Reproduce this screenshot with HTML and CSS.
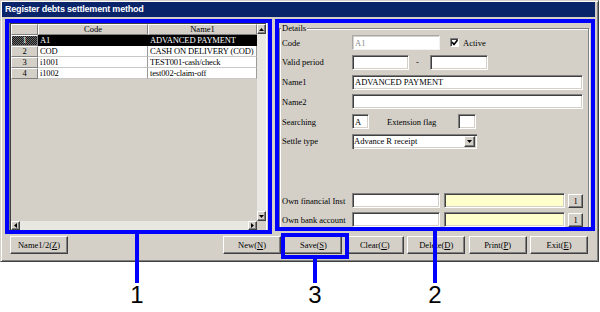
FILE: index.html
```html
<!DOCTYPE html>
<html lang="en">
<head>
	<meta charset="UTF-8">
	<title>Register debts settlement method</title>
	<link rel="stylesheet" href="styles.css">
</head>
<body>
	<div class="window">
		<div class="titlebar">Register debts settlement method</div>
		<div class="main">
			<div class="grid">
				<div class="cells">
					<div class="row head">
						<div class="rh"></div>
						<div class="c code">Code</div>
						<div class="c name">Name1</div>
					</div>
					<div class="row sel">
						<div class="rh">1</div>
						<div class="c code">A1</div>
						<div class="c name">ADVANCED PAYMENT</div>
					</div>
					<div class="row">
						<div class="rh">2</div>
						<div class="c code">COD</div>
						<div class="c name">CASH ON DELIVERY (COD)</div>
					</div>
					<div class="row">
						<div class="rh">3</div>
						<div class="c code">i1001</div>
						<div class="c name">TEST001-cash/check</div>
					</div>
					<div class="row">
						<div class="rh">4</div>
						<div class="c code">i1002</div>
						<div class="c name">test002-claim-off</div>
					</div>
				</div>
				<div class="vscroll">
					<div class="sbtn"><svg width="5" height="3"><polygon points="0,3 5,3 2.5,0"/></svg></div>
					<div class="track"></div>
					<div class="sbtn"><svg width="5" height="3"><polygon points="0,0 5,0 2.5,3"/></svg></div>
				</div>
				<div class="hscroll">
					<div class="sbtn"><svg width="3" height="5"><polygon points="3,0 3,5 0,2.5"/></svg></div>
					<div class="track"></div>
					<div class="sbtn"><svg width="3" height="5"><polygon points="0,0 0,5 3,2.5"/></svg></div>
				</div>
				<div class="corner"></div>
			</div>

			<fieldset class="details">
				<legend>Details</legend>
				<div class="form">
					<div class="frow">
						<span class="lbl">Code</span>
						<input class="edit dis w88" value="A1">
						<span class="check"><svg width="7" height="7"><polyline points="1,3 3,5.5 6.5,1" /></svg></span>
						<span class="checklbl">Active</span>
					</div>
					<div class="frow">
						<span class="lbl">Valid period</span>
						<input class="edit w57" value="">
						<span class="dash">-</span>
						<input class="edit w58" value="">
					</div>
					<div class="frow">
						<span class="lbl">Name1</span>
						<input class="edit w231" value="ADVANCED PAYMENT">
					</div>
					<div class="frow">
						<span class="lbl">Name2</span>
						<input class="edit w231" value="">
					</div>
					<div class="frow">
						<span class="lbl">Searching</span>
						<input class="edit w17" value="A">
						<span class="extlbl">Extension flag</span>
						<input class="edit w18" value="">
					</div>
					<div class="frow">
						<span class="lbl">Settle type</span>
						<div class="select">
							<span class="seltext">Advance R receipt</span>
							<span class="drop"><svg width="5" height="3"><polygon points="0,0 5,0 2.5,3"/></svg></span>
						</div>
					</div>

					<div class="frow own">
						<span class="lbl">Own financial Inst</span>
						<input class="edit w88" value="">
						<input class="edit ref" value="">
						<button class="pick">1</button>
					</div>
					<div class="frow">
						<span class="lbl">Own bank account</span>
						<input class="edit w88" value="">
						<input class="edit ref" value="">
						<button class="pick">1</button>
					</div>
				</div>
			</fieldset>
		</div>

		<div class="buttons">
			<button class="btn">Name1/2(<u>Z</u>)</button>
			<div class="cmds">
				<button class="btn">New(<u>N</u>)</button>
				<button class="btn">Save(<u>S</u>)</button>
				<button class="btn">Clear(<u>C</u>)</button>
				<button class="btn">Delete(<u>D</u>)</button>
				<button class="btn">Print(<u>P</u>)</button>
				<button class="btn">Exit(<u>E</u>)</button>
			</div>
		</div>
	</div>

	<!-- callouts drawn over the screenshot -->
	<div class="marks">
		<div class="box box-grid"></div>
		<div class="box box-details"></div>
		<div class="box box-save"></div>
		<div class="callout c1"><span class="stem"></span><span class="num">1</span></div>
		<div class="callout c3"><span class="stem"></span><span class="num">3</span></div>
		<div class="callout c2"><span class="stem"></span><span class="num">2</span></div>
	</div>
</body>
</html>
```

FILE: styles.css
```css
* {
	margin: 0;
	padding: 0;
}
body {
	background: #fff;
	font: 8.5px "Liberation Serif", serif;
	color: #000;
}
input, button {
	font: inherit;
	color: inherit;
}

.window {
	width: 599px;
	height: 262px;
	box-sizing: border-box;
	border: 1px solid;
	border-color: #d4d0c8 #404040 #404040 #d4d0c8;
	box-shadow: inset 1px 1px #fff, inset -1px -1px #808080;
	padding: 1px;
	background: #d4d0c8;
}
.titlebar {
	height: 15px;
	box-sizing: border-box;
	margin-right: 2px;
	padding: 2px 0 0 3px;
	line-height: 13px;
	background: #0a246a;
	color: #fff;
	font: bold 9px "Liberation Sans", Arial, sans-serif;
	letter-spacing: -0.2px;
	white-space: nowrap;
}
.main {
	display: flex;
	align-items: flex-start;
	height: 219px;
	box-sizing: border-box;
	padding: 5px 0 0 7px;
}

/* list grid */
.grid {
	display: grid;
	grid-template-columns: 246px 9px;
	grid-template-rows: 197px 9px;
	border: 1px solid;
	border-color: #808080 #fff #fff #808080;
	padding: 1px 0 0 1px;
	background: #404040;
}
.cells {
	background: #d4d0c8;
	overflow: hidden;
}
.row {
	display: flex;
	height: 11px;
	line-height: 10px;
	white-space: nowrap;
}
.rh {
	width: 27px;
	box-sizing: border-box;
	border-right: 1px solid #808080;
	border-bottom: 1px solid #808080;
	border-top: 1px solid #fff;
	border-left: 1px solid #fff;
	line-height: 9px;
	text-align: center;
	background: #d4d0c8;
}
.c {
	box-sizing: border-box;
	padding-left: 2px;
	overflow: hidden;
	letter-spacing: -0.15px;
	background: #fff;
	border-right: 1px solid #9a9a9a;
	border-bottom: 1px solid #c8c8c8;
}
.code {
	width: 110px;
}
.name {
	width: 109px;
}
.head .c {
	padding: 0;
	text-align: center;
	line-height: 9px;
	letter-spacing: 0;
	background: #d4d0c8;
	border-top: 1px solid #fff;
	border-left: 1px solid #fff;
	border-right-color: #808080;
	border-bottom-color: #808080;
}
.sel .rh {
	background: repeating-conic-gradient(#1a1a1a 0 25%, #6a6a6a 0 50%) 0 0 / 2px 2px;
	color: #fff;
}
.sel .c {
	background: #000;
	color: #fff;
	border-color: #000;
}
.vscroll {
	display: flex;
	flex-direction: column;
	background: #d4d0c8;
}
.hscroll {
	display: flex;
	background: #d4d0c8;
}
.track {
	flex: 1;
	background: #e9e7e2;
}
.sbtn {
	width: 9px;
	height: 10px;
	box-sizing: border-box;
	display: flex;
	align-items: center;
	justify-content: center;
	border: 1px solid;
	border-color: #fff #404040 #404040 #fff;
	box-shadow: inset -1px -1px #808080;
	background: #d4d0c8;
}
.hscroll .sbtn {
	height: 9px;
}
.corner {
	background: #d4d0c8;
}

/* details group */
.details {
	margin: 1px 0 0 12px;
	width: 310px;
	height: 206px;
	box-sizing: border-box;
	border: 1px solid #808080;
	box-shadow: inset 1px 1px #fff, 1px 1px #fff;
	padding: 2px 5px 1px 2px;
}
.details legend {
	margin-left: -1px;
	padding: 0 1px;
	line-height: 10px;
	background: #d4d0c8;
}
.form {
	display: flex;
	flex-direction: column;
	gap: 4.8px;
	height: 100%;
}
.frow {
	display: flex;
	align-items: center;
	height: 15px;
	white-space: nowrap;
}
.own {
	margin-top: auto;
	margin-bottom: -0.8px;
}
.lbl {
	width: 70px;
}
.edit {
	box-sizing: border-box;
	height: 15px;
	padding: 0 2px;
	border: 1px solid;
	border-color: #808080 #fff #fff #808080;
	box-shadow: inset 1px 1px #404040, inset -1px -1px #d4d0c8;
	background: #fff;
	outline: none;
}
.dis {
	color: #8a8a8a;
	border-color: #a8a8a8 #f2f2f2 #f2f2f2 #a8a8a8;
	box-shadow: inset 1px 1px #d4d0c8;
}
.w17 { width: 17px; }
.w18 { width: 18px; }
.w57 { width: 57px; }
.w58 { width: 58px; }
.w88 { width: 88px; }
.w231 { width: 231px; }
.ref {
	width: 121px;
	margin-left: 4px;
	background: #ffffcc;
}
.check {
	width: 9px;
	height: 9px;
	box-sizing: border-box;
	margin-left: 10px;
	display: flex;
	align-items: center;
	justify-content: center;
	border: 1px solid;
	border-color: #808080 #fff #fff #808080;
	box-shadow: inset 1px 1px #404040;
	background: #fff;
}
.check polyline {
	fill: none;
	stroke: #000;
	stroke-width: 1.6;
}
.checklbl {
	margin-left: 4px;
}
.dash {
	width: 21px;
	text-align: center;
	padding-right: 4px;
	box-sizing: border-box;
}
.extlbl {
	width: 71px;
	margin-left: 18px;
}
.select {
	display: flex;
	width: 125px;
	height: 15px;
	box-sizing: border-box;
	padding: 2px;
	border: 0;
	box-shadow: inset 1px 1px #808080, inset 2px 2px #404040, inset -1px -1px #fff, inset -2px -2px #d4d0c8;
	background: #fff;
}
.seltext {
	flex: 1;
	line-height: 11px;
}
.drop {
	width: 11px;
	height: 11px;
	box-sizing: border-box;
	display: flex;
	align-items: center;
	justify-content: center;
	border: 1px solid;
	border-color: #fff #404040 #404040 #fff;
	box-shadow: inset -1px -1px #808080;
	background: #d4d0c8;
}
.pick {
	width: 15px;
	height: 14px;
	margin-left: 3px;
	border: 1px solid;
	border-color: #fff #404040 #404040 #fff;
	box-shadow: inset -1px -1px #808080;
	background: #d4d0c8;
	line-height: 12px;
}

/* bottom buttons */
.buttons {
	display: flex;
	justify-content: space-between;
	padding: 0 9px 0 8px;
}
.cmds {
	display: flex;
	gap: 3.4px;
}
.btn {
	width: 58px;
	height: 18px;
	border: 1px solid;
	border-color: #fff #404040 #404040 #fff;
	box-shadow: inset -1px -1px #808080;
	background: #d4d0c8;
	white-space: nowrap;
}

/* annotation overlay */
.marks {
	position: absolute;
	left: 0;
	top: 0;
}
.box {
	position: absolute;
	box-sizing: border-box;
	border: 4px solid #00f;
}
.box-grid {
	left: 5px;
	top: 19px;
	width: 267px;
	height: 215px;
}
.box-details {
	left: 275px;
	top: 19px;
	width: 320px;
	height: 212px;
}
.box-save {
	left: 281px;
	top: 233px;
	width: 68px;
	height: 26px;
}
.callout {
	position: absolute;
	width: 20px;
	display: flex;
	flex-direction: column;
	align-items: center;
}
.stem {
	width: 4px;
	background: #00f;
}
.num {
	font: 24px/24px "Liberation Sans", Arial, sans-serif;
}
.c1 { left: 127px; top: 234px; }
.c1 .stem { height: 49px; }
.c3 { left: 305px; top: 259px; }
.c3 .stem { height: 24px; }
.c2 { left: 425px; top: 231px; }
.c2 .stem { height: 52px; }
```
